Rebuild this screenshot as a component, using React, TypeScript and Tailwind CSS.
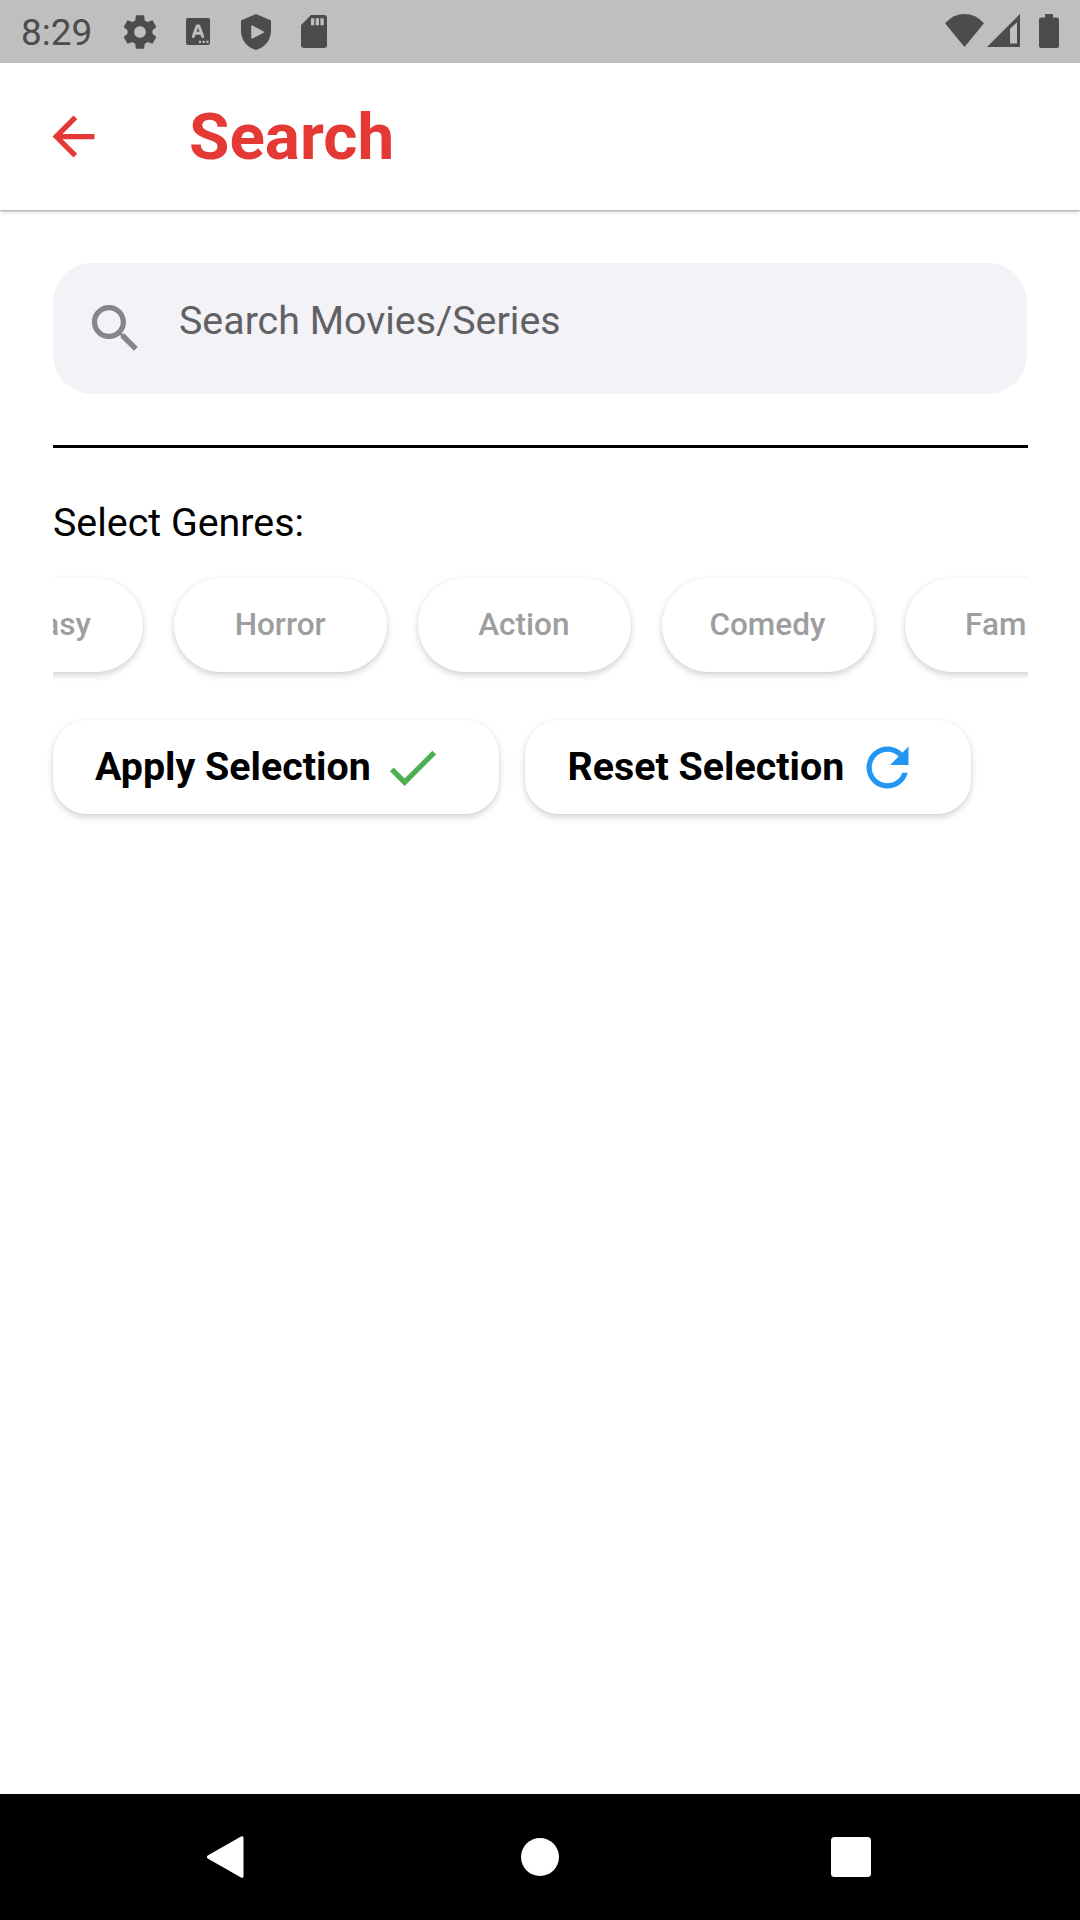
import React from "react";

const genres = ["Fantasy", "Horror", "Action", "Comedy", "Family"];

function StatusBar() {
  return (
    <header className="flex h-[63px] shrink-0 items-start bg-[#bfbfbf] text-[#4c4c4c]">
      <span className="ml-[21px] mt-[10px] w-[99px] whitespace-nowrap text-[37px] leading-[46px]">8:29</span>
      <svg className="mt-[11.5px] size-[40px] fill-current" viewBox="0 0 24 24">
        <path d="M19.43 12.98c.04-.32.07-.64.07-.98s-.03-.66-.07-.98l2.11-1.65c.19-.15.24-.42.12-.64l-2-3.46c-.12-.22-.39-.3-.61-.22l-2.49 1c-.52-.4-1.08-.73-1.69-.98l-.38-2.65C14.46 2.18 14.25 2 14 2h-4c-.25 0-.46.18-.49.42l-.38 2.65c-.61.25-1.17.59-1.69.98l-2.49-1c-.23-.09-.49 0-.61.22l-2 3.46c-.13.22-.07.49.12.64l2.11 1.65c-.04.32-.07.65-.07.98s.03.66.07.98l-2.11 1.65c-.19.15-.24.42-.12.64l2 3.46c.12.22.39.3.61.22l2.49-1c.52.4 1.08.73 1.69.98l.38 2.65c.03.24.24.42.49.42h4c.25 0 .46-.18.49-.42l.38-2.65c.61-.25 1.17-.59 1.69-.98l2.49 1c.23.09.49 0 .61-.22l2-3.46c.12-.22.07-.49-.12-.64l-2.11-1.65zM12 15.5c-1.93 0-3.5-1.57-3.5-3.5s1.57-3.5 3.5-3.5 3.5 1.57 3.5 3.5-1.57 3.5-3.5 3.5z" />
      </svg>
      <svg className="ml-[26px] mt-[18px] h-[27px] w-[24px] fill-current" viewBox="0 0 24 27">
        <rect width="24" height="27" rx="2" />
        <path d="M7.300 18.400 11.100 8h1.800l3.800 10.400M9 15.200h6" fill="none" stroke="#bfbfbf" strokeWidth="2.9" strokeLinecap="round" strokeLinejoin="round" />
        <path d="M12.900 22.800h2.200v2.200h-2.200zM16.600 22.800h2.200v2.200h-2.200zM20.300 22.800h2.200v2.200h-2.200z" fill="#bfbfbf" />
      </svg>
      <svg className="ml-[31px] mt-[13.5px] h-[36px] w-[30px] fill-current" viewBox="0 0 30 36">
        <path fillRule="evenodd" d="M15 0 30 6.4V16.5C30 26 24 33.5 15 36 6 33.5 0 26 0 16.5V6.4ZM10.2 12.2v11.4q0 1.4 1.3.8L22.6 18.8q1-.7 0-1.4L11.5 11.4q-1.3-.6-1.3.8Z" />
      </svg>
      <svg className="ml-[30px] mt-[15px] h-[33px] w-[26px] fill-current" viewBox="0 0 26 33">
        <path fillRule="evenodd" d="M10 0H23q3 0 3 3V30q0 3-3 3H3q-3 0-3-3V10ZM10 3.3v7h3.3v-7ZM14.7 3.3v7H18v-7ZM19.4 3.3v7h3.3v-7Z" />
      </svg>
      <svg className="ml-auto mt-[14px] h-[33px] w-[39px] fill-current" viewBox="0 0 39 33">
        <path d="M0 9.3Q8.500 0 19.500 0T39 9.300L19.500 33Z" />
      </svg>
      <svg className="ml-[3px] mt-[14px] h-[33px] w-[33px] fill-current" viewBox="0 0 33 33">
        <path fillRule="evenodd" d="M33 0V33H0ZM30 8.300 23 14.700V29.600H30Z" />
      </svg>
      <svg className="ml-[19px] mr-[21px] mt-[14px] h-[34px] w-[20px] fill-current" viewBox="0 0 20 34">
        <path d="M6 0h8v3.500h4q2 0 2 2V32q0 2-2 2H2q-2 0-2-2V5.500q0-2 2-2h4Z" />
      </svg>
    </header>
  );
}

function AppBar() {
  return (
    <div className="z-10 flex h-[147px] shrink-0 items-center bg-white pl-[42px] text-[#e53935] shadow-[0_1px_2px_rgba(0,0,0,0.34),0_3px_4px_rgba(0,0,0,0.08)]">
      <svg className="size-[63px] fill-current" viewBox="0 0 24 24">
        <path d="M20 11H7.830l5.590-5.590L12 4l-8 8 8 8 1.410-1.410L7.830 13H20v-2z" />
      </svg>
      <h1 className="ml-[84px] text-[65.6px] font-bold leading-[76px]">Search</h1>
    </div>
  );
}

function ActionButton({ label, children }: { label: string; children: React.ReactNode }) {
  return (
    <button className="flex h-[94.5px] w-[446.25px] items-center rounded-[34px] bg-white pl-[42.5px] shadow-[0_0_2px_rgba(0,0,0,0.05),0_3px_7px_rgba(0,0,0,0.18)]">
      <span className="whitespace-nowrap text-[39.375px] font-bold leading-[46px]">{label}</span>
      {children}
    </button>
  );
}

export default function App() {
  return (
    <div className="flex h-[1920px] w-[1080px] flex-col overflow-hidden bg-white font-[Roboto,sans-serif] text-black">
      <StatusBar />
      <AppBar />
      <main className="flex flex-1 flex-col px-[52.5px] pt-[53px]">
        <div className="mr-[0.5px] flex h-[131px] items-center rounded-[39.4px] bg-[#f2f2f7] pl-[31.5px]">
          <svg className="size-[63px] fill-[#868688]" viewBox="0 0 24 24">
            <path d="M15.500 14h-.790l-.280-.270C15.410 12.590 16 11.110 16 9.500 16 5.910 13.090 3 9.500 3S3 5.910 3 9.500 5.910 16 9.500 16c1.610 0 3.090-.590 4.230-1.570l.270.280v.790l5 4.990L20.490 19l-4.990-5zm-6 0C7.010 14 5 11.990 5 9.500S7.010 5 9.500 5 14 7.010 14 9.500 11.990 14 9.500 14z" />
          </svg>
          <span className="mb-[15px] ml-[32px] text-[39.375px] leading-[46px] text-[#616163]">Search Movies/Series</span>
        </div>
        <div className="mt-[51px] h-[2.6px] shrink-0 bg-black" />
        <p className="ml-[0.5px] mt-[52px] text-[39.375px] leading-[46px]">Select Genres:</p>
        <div className="-mb-[20px] mt-[22px] h-[124px] shrink-0 overflow-hidden pt-[10px]">
          <div className="-ml-[121.7px] flex gap-[31px]">
            {genres.map((genre) => (
              <button
                key={genre}
                className="h-[94.5px] w-[212.600px] shrink-0 rounded-full bg-white pr-[1px] text-[31.5px] font-medium leading-[37px] text-[#9e9e9e] shadow-[0_0_2px_rgba(0,0,0,0.05),0_3px_7px_rgba(0,0,0,0.18)] first:pr-[3px] last:pr-0"
              >
                {genre}
              </button>
            ))}
          </div>
        </div>
        <div className="mt-[48px] flex gap-[26.25px]">
          <ActionButton label="Apply Selection">
            <svg className="ml-[10px] mt-[2px] size-[63px] fill-[#4caf50]" viewBox="0 0 24 24">
              <path d="M9 16.170L4.830 12l-1.420 1.410L9 19 21 7l-1.410-1.410z" />
            </svg>
          </ActionButton>
          <ActionButton label="Reset Selection">
            <svg className="ml-[12px] mt-[2px] size-[63px] fill-[#2196f3]" viewBox="0 0 24 24">
              <path d="M17.650 6.350C16.200 4.900 14.210 4 12 4c-4.420 0-7.990 3.580-7.990 8s3.570 8 7.990 8c3.730 0 6.840-2.550 7.730-6h-2.080c-.820 2.330-3.040 4-5.650 4-3.310 0-6-2.690-6-6s2.690-6 6-6c1.660 0 3.140.690 4.220 1.780L13 11h7V4l-2.350 2.350z" />
            </svg>
          </ActionButton>
        </div>
      </main>
      <nav className="flex h-[126px] shrink-0 items-center bg-black">
        <svg className="ml-[206px] h-[42px] w-[38px] fill-white" viewBox="0 0 38 42">
          <path d="M35 .5q2.500-1.200 2.500 1.500V40q0 2.700-2.500 1.500L1.700 22.500q-1.800-1.500 0-3Z" />
        </svg>
        <div className="ml-[276.5px] size-[38.500px] rounded-full bg-white" />
        <div className="ml-[272px] size-[40px] rounded-[3.500px] bg-white" />
      </nav>
    </div>
  );
}
